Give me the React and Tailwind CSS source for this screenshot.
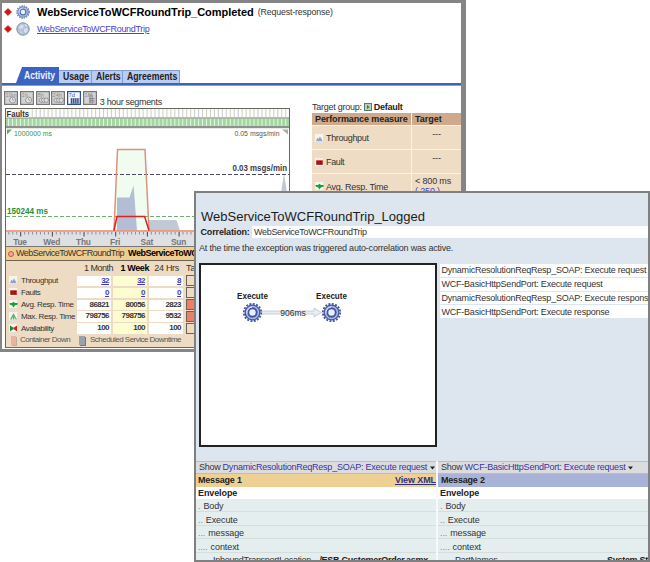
const STEP = 3.96;

function Gear({ size, color = "#44549f", fill = "#a9bce6" }) {
  return (
    <svg width={size} height={size} viewBox="0 0 20 20" className="shrink-0">
      <circle cx="10" cy="10" r="8.7" fill="none" stroke={color} strokeWidth="1.8" strokeDasharray="2 1.417" />
      <circle cx="10" cy="10" r="7.3" fill={fill} stroke={color} strokeWidth="1.3" />
      <circle cx="10" cy="10" r="4.2" fill="#e6f0ff" stroke={color} strokeWidth="1.9" />
      <path d="M4.4 11a5.8 5.8 0 0 1 5.200-6.500" fill="none" stroke="#dfe8fa" strokeWidth="1" />
    </svg>
  );
}

function Globe() {
  return (
    <svg width="14" height="14" viewBox="0 0 14 14" className="shrink-0">
      <circle cx="7" cy="7" r="6.2" fill="#b4c3da" stroke="#7f90ac" strokeWidth="1" />
      <path d="M3 4.5 6 2.5 8 4 6.5 6.5 4 7ZM8 7l3-1 1 2-2 3-2-1ZM4 9l2 1-1 1.5Z" fill="#d6e0ec" />
      <path d="M9 2.5l2 1.5" stroke="#f2f6fa" strokeWidth="1" />
    </svg>
  );
}

function Diamond() {
  return (
    <svg width="8" height="8" viewBox="0 0 8 8" className="shrink-0">
      <path d="M4 .4 7.6 4 4 7.6.4 4Z" fill="#d81408" stroke="#a31a10" strokeWidth=".5" />
    </svg>
  );
}

function Tool({ label, kind, active }) {
  const c = active ? "#26345e" : "#85858a";
  return (
    <svg width="14" height="14" viewBox="0 0 14 14" className="shrink-0">
      <rect x=".6" y=".6" width="12.8" height="12.8" fill={active ? "#f4f7ff" : "#d3d3d3"} stroke={active ? "#2a48b8" : "#77777a"} strokeWidth="1.2" />
      <text x="1.6" y="6" fontSize="5.6" fontFamily="Liberation Sans, sans-serif" fill={active ? "#2a55d8" : "#8d8d90"}>{label}</text>
      {kind === "clock" && (
        <g fill="#e6e6e6" stroke={c} strokeWidth=".8">
          <circle cx="8.6" cy="9" r="3" />
          <path d="M8.6 7.2V9l1.4.6" fill="none" />
        </g>
      )}
      {kind === "clocks" && (
        <g fill="#dedede" stroke={c} strokeWidth=".8">
          <circle cx="5.2" cy="9.2" r="2.2" />
          <circle cx="7.7" cy="9.2" r="2.2" />
          <circle cx="10.2" cy="9.2" r="2.2" />
        </g>
      )}
      {kind === "week" && (
        <path d="M3.5 8h9M3.5 10h9M3.5 12h9M4.5 7.4v5M6.6 7.4v5M8.7 7.4v5M10.8 7.4v5" stroke={c} strokeWidth=".8" fill="none" />
      )}
      {kind === "month" && (
        <path d="M6 7.5h5.5M6 9.2h5.5M6 11h5.5M7 3v9.5M9.2 4v8.5" stroke={c} strokeWidth=".9" fill="none" />
      )}
    </svg>
  );
}

function MeasureIcon({ kind }) {
  return (
    <svg width="9" height="9" viewBox="0 0 9 9" className="shrink-0">
      <rect width="9" height="9" fill="#f7f4ee" />
      <path d="M.2 8.8h8.6V.2" fill="none" stroke="#c9c3b8" strokeWidth=".6" />
      {kind === "throughput" && <path d="M1 7.3 2.3 3.8 3.6 5 4.9 2.4 6.3 4.4 7.6 7.3Z" fill="#93a3c6" />}
      {kind === "fault" && (
        <g>
          <rect x="1.2" y="2.3" width="6.6" height="4.6" fill="#b51b1b" />
          <path d="M3 3.5v2M5 3.5h1.6M5 5.4h1.6" stroke="#5a0b0b" strokeWidth=".8" />
        </g>
      )}
      {kind === "avg" && <path d="M.6 3H3L4.5 1.800 6 3h2.6v1.400L5.8 5.6 4.5 7.6 3.200 5.600.6 4.400Z" fill="#16a22e" />}
      {kind === "max" && <path d="M1 7.5 3 3.8 4.5 1.2 6 3.8 8 7.5H6.2V5.4H5.4v2.1H3.8V5.4H3v2.1Z" fill="#58b368" />}
      {kind === "avail" && (
        <g>
          <path d="M1 1.5v6l3.6-2.4V3.8Z" fill="#1e8a38" />
          <path d="M8 1.5v6L4.6 5.1V3.8Z" fill="#c02b22" />
        </g>
      )}
    </svg>
  );
}

function FaultStrips() {
  const cols = Array.from({ length: 72 }, (_, i) => i);
  return (
    <svg width="283" height="20" viewBox="0 0 283 20" className="block">
      <rect width="283" height="20" fill="#fdfdfb" />
      {cols.map((i) => (
        <rect key={i} x={i * STEP + 2} y="0" width="1" height="8.5" fill={i % 5 === 3 ? "#c2c8dc" : "#d0cfc6"} />
      ))}
      <rect y="8.5" width="283" height="1.2" fill="#7b7f78" />
      <rect y="9.7" width="283" height="7.3" fill="#a2d7a0" />
      {cols.map((i) => (
        <rect key={i} x={i * STEP + 2} y="9.7" width="1" height="7.3" fill="#e4f7e2" />
      ))}
      <rect y="17" width="283" height="2" fill="#8f918f" />
      <rect y="19" width="283" height="1" fill="#e9eae8" />
      <rect width="24" height="8.4" fill="#f8f8f6" />
      <text x=".5" y="7.6" fontSize="9" fontWeight="bold" textLength="22.5" lengthAdjust="spacingAndGlyphs" fill="#333">Faults</text>
    </svg>
  );
}

function Plot() {
  const ticks = Array.from({ length: 71 }, (_, i) => i);
  const days = ["Tue", "Wed", "Thu", "Fri", "Sat", "Sun"];
  return (
    <svg width="283" height="118" viewBox="6 129 283 118" className="block">
      <rect x="6" y="129" width="283" height="102" fill="#fff" />
      <path d="M114 230.500 117.500 149.500H145L149 230.500Z" fill="#f1fcf1" />
      <path d="M117 230.500V197.500H129.500L133.600 185.500 137 230.500Z" fill="#b3bed4" />
      <path d="M149 230.500V220H176.500L180 230.500Z" fill="#c0c9d4" />
      <path d="M280.500 196 284 173.500 287.500 196Z" fill="#c0c9d4" />
      <path d="M6 174.500H289" stroke="#4b4968" strokeWidth="1" strokeDasharray="4 2" />
      <path d="M6 216.500H289" stroke="#70ad6c" strokeWidth="1" strokeDasharray="4 2" />
      <path d="M6 231H289" stroke="#ed8068" strokeWidth="1.500" />
      <path d="M114 230.500 117.500 149.500H145L149 230.500" fill="none" stroke="#dc927d" strokeWidth="1.500" />
      <path d="M114 230.500 117 216.600H144.600L149 230.500" fill="none" stroke="#d92323" strokeWidth="1.500" />
      <path d="M7 129.500h5l-5 5Z" fill="#65ad64" />
      <path d="M282 129.500h6v5Z" fill="#a9ada6" />
      <text x="14" y="135.800" fontSize="8" textLength="38" lengthAdjust="spacingAndGlyphs" fill="#3c9440">1000000 ms</text>
      <text x="234.500" y="135.800" fontSize="8" textLength="45" lengthAdjust="spacingAndGlyphs" fill="#555">0.05 msgs/min</text>
      <text x="232.500" y="171" fontSize="8.500" fontWeight="bold" textLength="54.500" lengthAdjust="spacingAndGlyphs" fill="#3a3848">0.03 msgs/min</text>
      <text x="7" y="213.600" fontSize="9" fontWeight="bold" textLength="41" lengthAdjust="spacingAndGlyphs" fill="#278f2b">150244 ms</text>
      <rect x="6" y="232" width="283" height="14.500" fill="#dfe0e4" />
      {ticks.map((i) => (
        <rect key={i} x={8.300 + i * STEP} y="232" width="1" height={i % 8 === 3 ? 4.500 : 2.500} fill={i % 8 === 3 ? "#444" : "#909090"} />
      ))}
      {days.map((d, i) => (
        <text key={d} x={20 + i * 31.700} y="244.800" fontSize="8.400" fontWeight="bold" letterSpacing="-.2" textAnchor="middle" fill="#77777a">{d}</text>
      ))}
      <rect x="6" y="246" width="283" height="1" fill="#77776e" />
    </svg>
  );
}

const stats = [
  ["throughput", "Throughput", "32", "32", "8", true, ""],
  ["fault", "Faults", "0", "0", "0", true, ""],
  ["avg", "Avg. Resp. Time", "86821", "80056", "2823", false, "bad"],
  ["max", "Max. Resp. Time", "798756", "798756", "9532", false, "bad"],
  ["avail", "Availability", "100", "100", "100", false, ""],
];

function StatsTable() {
  return (
    <div className="h-[86px] bg-[#eddcc3] text-[8.5px] leading-[12px] text-[#333]">
      <div className="flex h-[14px] items-end whitespace-nowrap pb-px text-[9px]">
        <div className="w-[71px]" />
        <div className="w-[36px] text-right tracking-[-0.5px]">1 Month</div>
        <div className="w-[36px] text-right font-bold tracking-[-0.4px] text-black">1 Week</div>
        <div className="w-[30px] text-right tracking-[-0.3px]">24 Hrs</div>
        <div className="ml-[7px]">Target</div>
      </div>
      {stats.map(([kind, label, a, b, c, link, state]) => (
        <div key={kind} className="flex h-[11.9px] items-center">
          <div className="ml-[3px] w-[12px]"><MeasureIcon kind={kind} /></div>
          <div className="w-[56px] whitespace-nowrap text-[8px] tracking-[-0.4px]">{label}</div>
          {[a, b, c].map((v, i) => (
            <div
              key={i}
              className={
                "mr-[2px] h-[10.4px] w-[34px] pr-[2px] text-right text-[8px] font-bold leading-[10.5px] tracking-[-0.55px] " +
                (i === 1 ? "bg-[#fdfdcf] " : "bg-white ") +
                (link ? "text-[#3d3bc8] underline" : "text-[#333]")
              }
            >
              {v}
            </div>
          ))}
          <div className={"ml-[1px] h-[11px] w-[34px] border border-[#6a6255] " + (state ? "bg-[#ed7f68]" : "bg-[#eddcc3]")} />
        </div>
      ))}
      <div className="flex h-[12px] items-center text-[8px] tracking-[-0.52px] text-[#555]">
        <div className="ml-[5px] mr-[4px] h-[9px] w-[5px] bg-[#e8b3a1] shadow-[1px_1px_0_#b9afa0]" />
        <div className="w-[59px] whitespace-nowrap">Container Down</div>
        <div className="mr-[5px] h-[9px] w-[6px] bg-[#9aa0ac] shadow-[1px_1px_0_#777]" />
        <div className="whitespace-nowrap">Scheduled Service Downtime</div>
      </div>
    </div>
  );
}

function Tab({ label, width }) {
  return (
    <div className={"h-[13px] border-r border-t border-[#829bd0] bg-[#b9ccf4] pl-[4px] leading-[12px] " + width}>
      <span className="inline-block origin-left scale-x-[0.87]">{label}</span>
    </div>
  );
}

function Tabs() {
  return (
    <div className="flex h-[16px] items-end pl-[14px] text-[10px] font-bold leading-[13px] text-[#222]">
      <div className="relative h-[16px] w-[43px]">
        <svg width="43" height="16" viewBox="0 0 43 16" className="block">
          <path d="M0 16 6 0H43V16Z" fill="#3b64c2" />
        </svg>
        <span className="absolute left-[7.5px] top-[2px] inline-block origin-left scale-x-[0.86] text-[#eef3ff]">Activity</span>
      </div>
      <Tab label="Usage" width="w-[33px]" />
      <Tab label="Alerts" width="w-[31px]" />
      <Tab label="Agreements" width="w-[57px]" />
    </div>
  );
}

function ActivityWindow() {
  return (
    <div className="absolute left-0 top-0 h-[352px] w-[466px] overflow-hidden border-b-[3px] border-l-2 border-r-[5px] border-t-[3px] border-[#858585] bg-white">
      <div className="flex h-[18px] items-center pl-[2px]">
        <Diamond />
        <div className="ml-[4px] mr-[7px]"><Gear size={14} color="#5671ab" fill="#c3d1e8" /></div>
        <span className="text-[11px] font-bold tracking-[-0.03px] text-black">WebServiceToWCFRoundTrip_Completed</span>
        <span className="ml-[4px] mt-px text-[8.8px] tracking-[-0.15px] text-[#333]">(Request-response)</span>
      </div>
      <div className="flex h-[16px] items-center pl-[2px]">
        <Diamond />
        <div className="ml-[4px] mr-[7px]"><Globe /></div>
        <span className="mt-px text-[9px] tracking-[-0.32px] text-[#4444cc] underline">WebServiceToWCFRoundTrip</span>
      </div>
      <div className="h-[30px]" />
      <Tabs />
      <div className="h-[3px] border-b border-[#7f9ddd] bg-[#3f63b6]" />
      <div className="flex">
        <div className="w-[288px] pl-[2px] pt-[5px]">
          <div className="flex h-[16px] items-start gap-[1.8px]">
            <Tool label="10m" kind="clock" />
            <Tool label="1h" kind="clock" />
            <Tool label="8h" kind="clocks" />
            <Tool label="24h" kind="clocks" />
            <Tool label="7d" kind="week" active />
            <Tool label="1M" kind="month" />
            <span className="ml-[1px] mt-[5px] text-[9px] leading-[12px] tracking-[-0.33px] text-[#333]">3 hour segments</span>
          </div>
          <div className="ml-px mt-px w-[285px] border border-[#666a5c]">
            <FaultStrips />
            <Plot />
            <div className="flex h-[14px] items-center overflow-hidden whitespace-nowrap border-b border-[#6b6455] bg-[#edcd92] text-[9px] text-[#333]">
              <span className="ml-[2px] mr-[2px] h-[6px] w-[6px] rounded-full border border-[#c4584a] bg-[#f1a898]" />
              <span className="tracking-[-0.5px]">WebServiceToWCFRoundTrip</span>
              <span className="ml-[4px] font-bold tracking-[-0.5px] text-black">WebServiceToWCFRoundTrip</span>
            </div>
            <StatsTable />
          </div>
        </div>
        <div className="flex-1 pl-[22px] pt-[16px] text-[9px] text-[#333]">
          <div className="flex h-[10px] items-center whitespace-nowrap leading-[10px] tracking-[-0.25px]">
            Target group:
            <svg width="8" height="8" viewBox="0 0 8 8" className="ml-[2px] mr-[2px]">
              <rect x=".5" y=".5" width="7" height="7" fill="#b9d0b9" stroke="#5a7a62" />
              <path d="M3 2v4l2.500-2Z" fill="#3e6b4a" />
            </svg>
            <b className="text-[#222]">Default</b>
          </div>
          <div className="mt-px grid grid-cols-[99px_1fr] gap-px bg-[#fbf3e8]">
            <div className="h-[11.5px] bg-[#cfaa8a] pl-[3px] font-bold leading-[12px] tracking-[-0.1px] text-[#222]">Performance measure</div>
            <div className="h-[11.5px] bg-[#cfaa8a] pl-[3px] font-bold leading-[12px] text-[#222]">Target</div>
            {[["throughput", "Throughput"], ["fault", "Fault"]].map(([k, t]) => [
              <div key={k} className="flex h-[23px] items-center gap-[2px] bg-[#eedcc5] pl-[3px] pt-[2px] tracking-[-0.35px]">
                <MeasureIcon kind={k} />
                <span className="mt-[2px]">{t}</span>
              </div>,
              <div key={k + "-target"} className="flex h-[23px] justify-center bg-[#eedcc5] pt-[3px] leading-[10px] tracking-[-0.2px]">---</div>,
            ])}
            <div className="flex h-[24px] items-center gap-[2px] bg-[#eedcc5] pl-[3px] pt-[2px] tracking-[-0.25px]">
              <MeasureIcon kind="avg" />
              <span className="mt-[2px]">Avg. Resp. Time</span>
            </div>
            <div className="h-[24px] bg-[#eedcc5] pl-[3px] pt-[2px] leading-[10px] tracking-[-0.15px]">
              &lt; 800 ms
              <div className="text-[#4444cc]">( 250 )</div>
            </div>
          </div>
        </div>
      </div>
    </div>
  );
}

const executions = [
  "DynamicResolutionReqResp_SOAP: Execute request",
  "WCF-BasicHttpSendPort: Execute request",
  "DynamicResolutionReqResp_SOAP: Execute response",
  "WCF-BasicHttpSendPort: Execute response",
];

function Message({ title, show, second, property, value }) {
  return (
    <div className={"overflow-hidden whitespace-nowrap " + (second ? "flex-1" : "w-[242px] border-r-2 border-[#f7f9fb]")}>
      <div className="flex h-[13px] items-center border-b border-t border-[#bdbdc0] bg-[#dcdcdf] pl-[3px] text-[9px] tracking-[-0.23px] text-[#333]">
        Show
        <span className="ml-[2px] mt-[1px] text-[#3434a4]">{show}</span>
        <svg width="5" height="4" viewBox="0 0 5 4" className="ml-[3px] shrink-0"><path d="M0 .5h5L2.500 3.500Z" fill="#222" /></svg>
      </div>
      <div className={"flex h-[13px] items-center justify-between pt-px text-[9px] font-bold text-[#222] " + (second ? "bg-[#a9b3d8] pl-[3px]" : "bg-[#edd093] pl-[2px]")}>
        <span className="tracking-[-0.2px]">{title}</span>
        {!second && <span className="tracking-[-0.1px] text-[#303080] underline">View XML</span>}
      </div>
      <div className="flex h-[12px] items-center bg-white pl-[2px] pt-[2px] text-[9px] font-bold tracking-[-0.1px] text-[#222]">Envelope</div>
      {["Body", "Execute", "message", "context"].map((t, i) => (
        <div key={t} className="flex h-[13.4px] items-center border-b border-[#d5dddd] bg-[#e5eeee] pl-[2px] pt-[4px] text-[9px] tracking-[-0.1px] text-[#333]">
          <span className="mr-[3px] text-[#888]">{".".repeat(i + 1)}</span>
          {t}
        </div>
      ))}
      <div className={"flex h-[14px] items-center justify-between bg-[#e5eeee] pl-[17px] pt-[2px] text-[9px] tracking-[-0.28px] text-[#333] " + (second ? "" : "pr-[8px]")}>
        {property}
        <b className="text-[#222]">{value}</b>
      </div>
    </div>
  );
}

function FlowCanvas() {
  return (
    <div className="h-[184px] w-[238px] border-2 border-[#222] bg-white">
      <svg width="234" height="180" viewBox="201 265 234 180" className="block">
        <path d="M262 311h52v-3l7.500 4.500-7.500 4.500v-3h-52Z" fill="#e7edf1" stroke="#c2cdd6" strokeWidth=".9" />
        <text x="252.500" y="299" fontSize="9" fontWeight="bold" textAnchor="middle" textLength="31" lengthAdjust="spacingAndGlyphs" fill="#222">Execute</text>
        <text x="331.500" y="299" fontSize="9" fontWeight="bold" textAnchor="middle" textLength="31" lengthAdjust="spacingAndGlyphs" fill="#222">Execute</text>
        <text x="293" y="315.500" fontSize="9" textAnchor="middle" textLength="25.500" lengthAdjust="spacingAndGlyphs" fill="#333">906ms</text>
        <g transform="translate(242.500 302.500)"><Gear size={20} /></g>
        <g transform="translate(321.500 302.500)"><Gear size={20} /></g>
      </svg>
    </div>
  );
}

function LoggedWindow() {
  return (
    <div className="absolute left-[194px] top-[191px] h-[371px] w-[456px] overflow-hidden border-2 border-[#808080] bg-[#dde5ee] text-[#333]">
      <div className="flex h-[33px] items-end pl-[5px] text-[13px] leading-[18px] text-[#1c1c1c]">WebServiceToWCFRoundTrip_Logged</div>
      <div className="flex h-[12px] items-center text-[9px]">
        <b className="w-[56px] pl-[4.5px] pt-px tracking-[-0.15px] text-[#222]">Correlation:</b>
        <span className="flex h-[12px] flex-1 items-center bg-white pl-[2px] pt-px tracking-[-0.31px]">WebServiceToWCFRoundTrip</span>
      </div>
      <div className="flex h-[25px] items-start pl-[3px] pt-[4px] text-[9px] leading-[12px] tracking-[-0.2px]">At the time the exception was triggered auto-correlation was active.</div>
      <div className="flex h-[198px] items-start pl-[3px]">
        <FlowCanvas />
        <div className="ml-[3px] mt-px flex flex-1 flex-col gap-px overflow-hidden whitespace-nowrap text-[9px] tracking-[-0.225px]">
          {executions.map((t) => (
            <div key={t} className="flex h-[12.8px] items-center bg-white pl-[1.5px] pt-px">{t}</div>
          ))}
        </div>
      </div>
      <div className="flex">
        <Message title="Message 1" show="DynamicResolutionReqResp_SOAP: Execute request" property="InboundTransportLocation" value="/ESB.CustomerOrder.asmx" />
        <Message title="Message 2" show="WCF-BasicHttpSendPort: Execute request" second property="PartNames" value="System.St" />
      </div>
    </div>
  );
}

export default function App() {
  return (
    <div className="relative h-[562px] w-[650px] overflow-hidden bg-white font-['Liberation_Sans',Arial,sans-serif]">
      <ActivityWindow />
      <LoggedWindow />
    </div>
  );
}
